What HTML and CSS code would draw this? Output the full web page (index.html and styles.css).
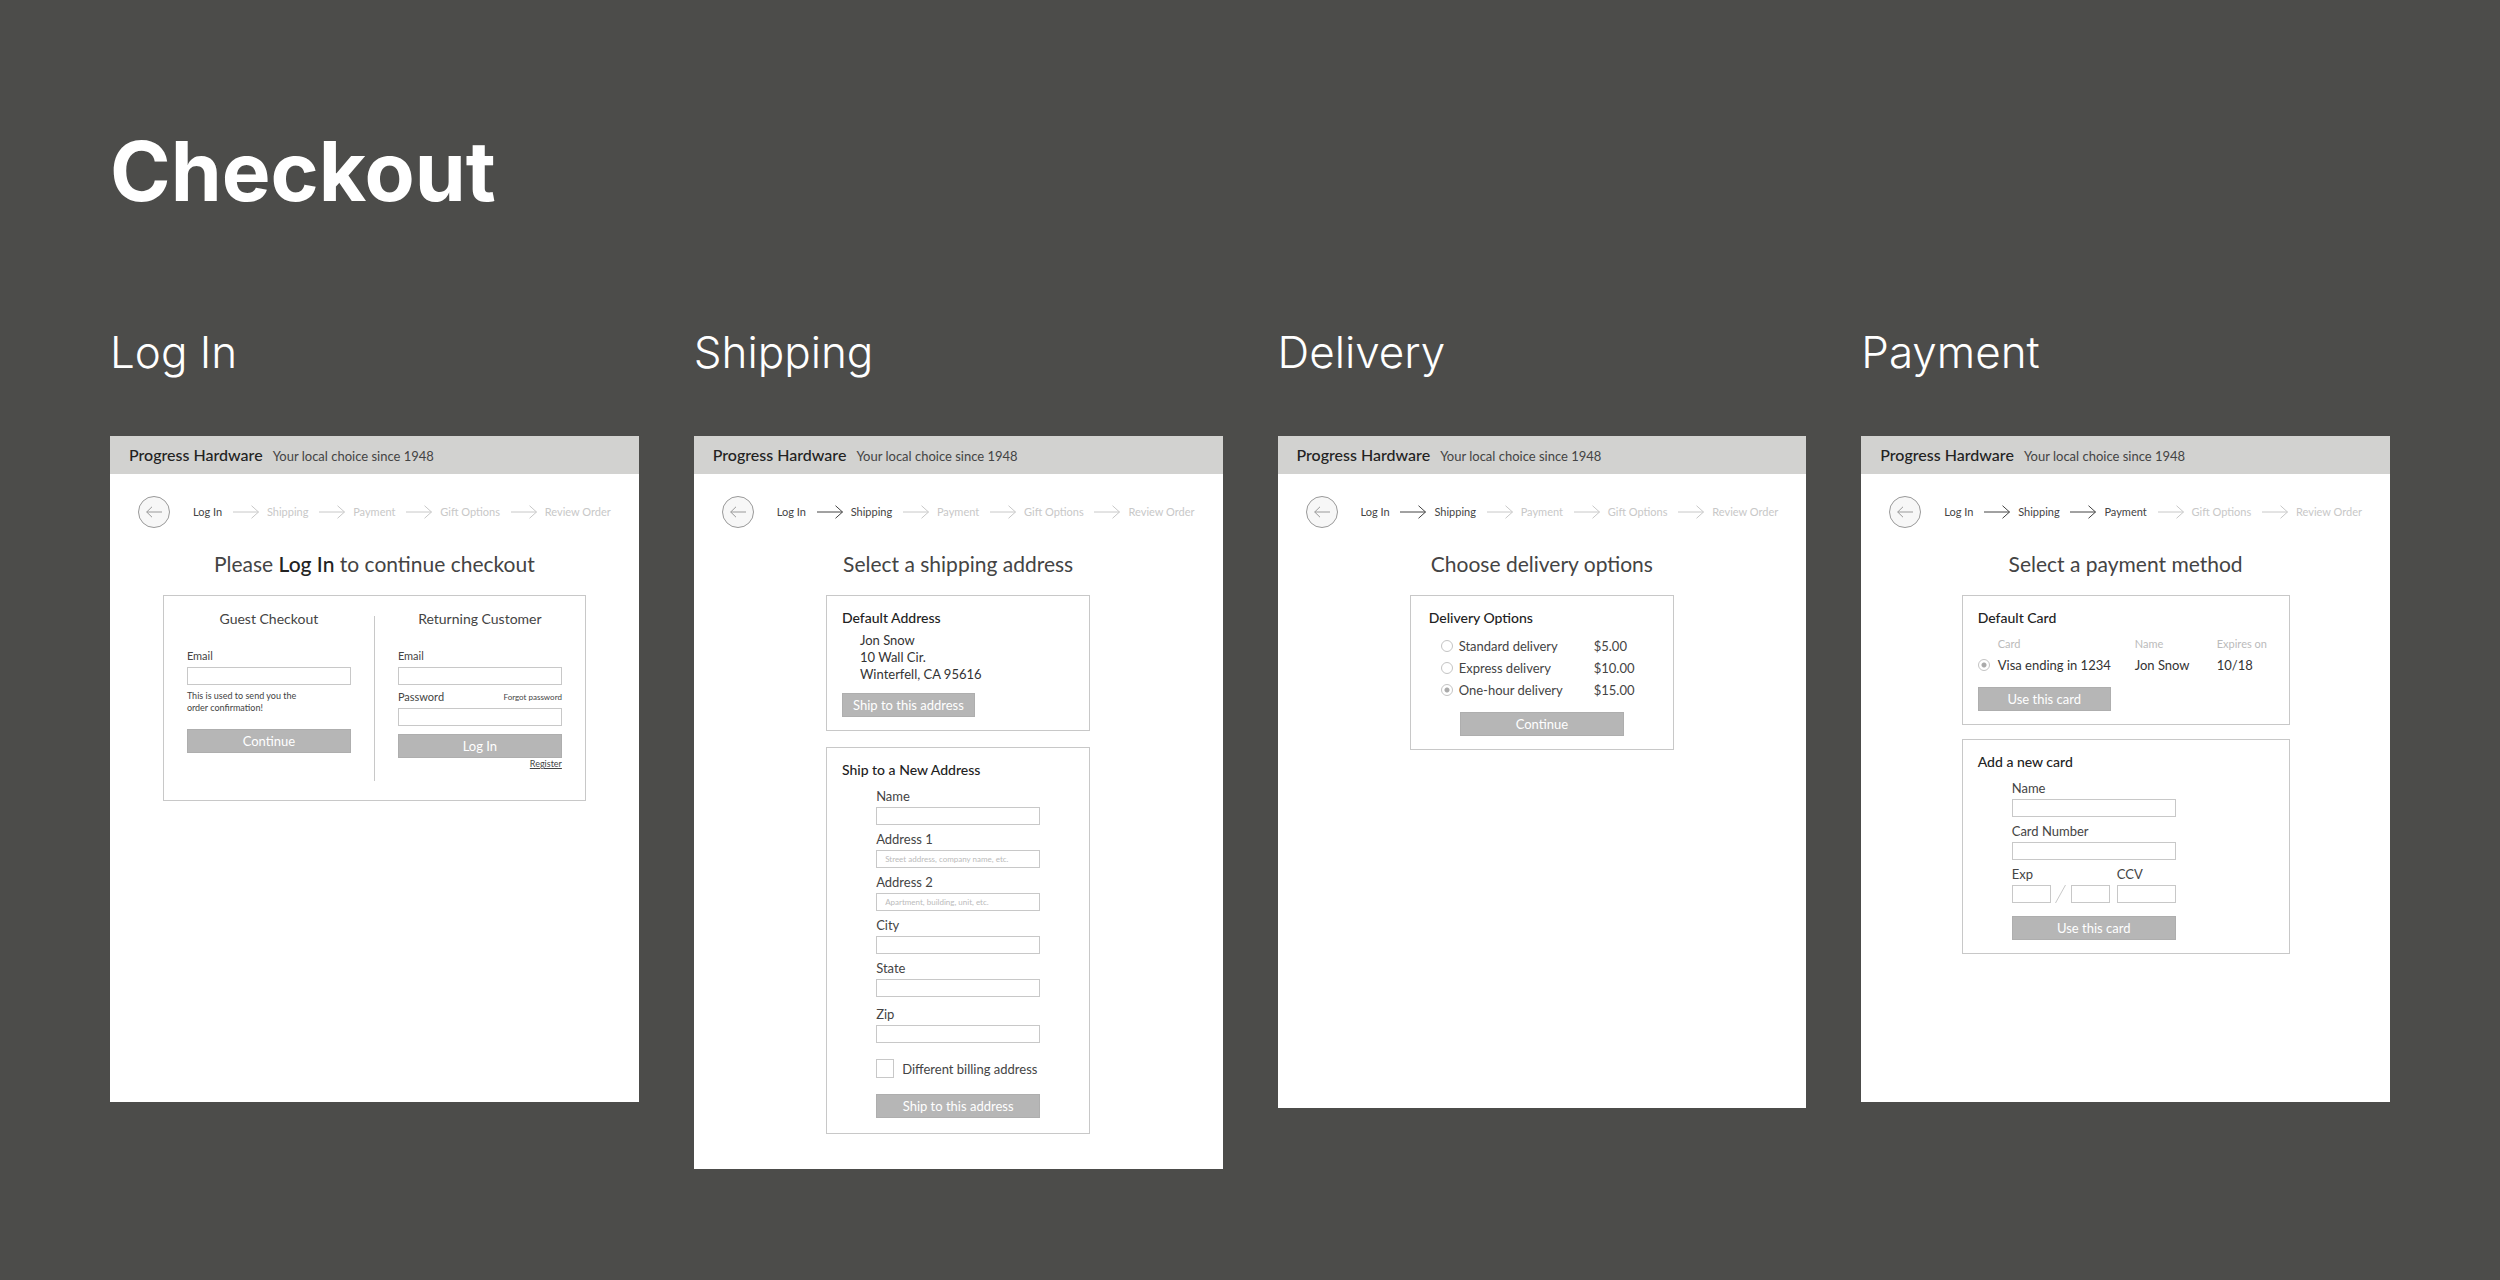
FILE: index.html
```html
<!DOCTYPE html>
<html lang="en">
<head>
<meta charset="utf-8">
<title>Checkout</title>
<link rel="stylesheet" href="styles.css">
</head>
<body>
<svg class="defs" aria-hidden="true">
  <symbol id="arrow" viewBox="0 0 26 14"><path d="M0 7H25.500M18.500.7L25.500 7L18.500 13.300" fill="none" stroke="currentColor"/></symbol>
  <symbol id="back" viewBox="0 0 16 12"><path d="M16 6H.7M6 .8L.7 6L6 11.200" fill="none" stroke="currentColor"/></symbol>
</svg>
<main class="board">
  <h1 class="board-title">Checkout</h1>
  <div class="flows">

    <section class="flow">
      <h2 class="flow-title">Log In</h2>
      <article class="screen">
        <header class="site-header"><span class="brand">Progress Hardware</span><span class="tagline">Your local choice since 1948</span></header>
        <nav class="progress" aria-label="Checkout progress">
          <button class="back" aria-label="Back"><svg class="back-icon"><use href="#back"/></svg></button>
          <ol class="steps">
            <li class="step done">Log In</li>
            <li class="step"><svg class="arrow"><use href="#arrow"/></svg>Shipping</li>
            <li class="step"><svg class="arrow"><use href="#arrow"/></svg>Payment</li>
            <li class="step"><svg class="arrow"><use href="#arrow"/></svg>Gift Options</li>
            <li class="step"><svg class="arrow"><use href="#arrow"/></svg>Review Order</li>
          </ol>
        </nav>
        <h3 class="heading">Please <strong>Log In</strong> to continue checkout</h3>
        <div class="box login-box">
          <form class="login-col">
            <h4 class="col-title">Guest Checkout</h4>
            <label class="label small" for="guest-email">Email</label>
            <input class="input" id="guest-email" type="email">
            <p class="note">This is used to send you the<br>order confirmation!</p>
            <button class="button guest-button" type="button">Continue</button>
          </form>
          <div class="divider"></div>
          <form class="login-col">
            <h4 class="col-title">Returning Customer</h4>
            <label class="label small" for="email">Email</label>
            <input class="input" id="email" type="email">
            <div class="label-row">
              <label class="label small" for="password">Password</label>
              <a class="forgot" href="#forgot">Forgot password</a>
            </div>
            <input class="input" id="password" type="password">
            <button class="button login-button" type="button">Log In</button>
            <a class="register" href="#register">Register</a>
          </form>
        </div>
      </article>
    </section>

    <section class="flow">
      <h2 class="flow-title">Shipping</h2>
      <article class="screen shipping">
        <header class="site-header"><span class="brand">Progress Hardware</span><span class="tagline">Your local choice since 1948</span></header>
        <nav class="progress" aria-label="Checkout progress">
          <button class="back" aria-label="Back"><svg class="back-icon"><use href="#back"/></svg></button>
          <ol class="steps">
            <li class="step done">Log In</li>
            <li class="step done"><svg class="arrow"><use href="#arrow"/></svg>Shipping</li>
            <li class="step"><svg class="arrow"><use href="#arrow"/></svg>Payment</li>
            <li class="step"><svg class="arrow"><use href="#arrow"/></svg>Gift Options</li>
            <li class="step"><svg class="arrow"><use href="#arrow"/></svg>Review Order</li>
          </ol>
        </nav>
        <h3 class="heading">Select a shipping address</h3>
        <form class="box narrow">
          <h4 class="box-title">Default Address</h4>
          <address class="address">Jon Snow<br>10 Wall Cir.<br>Winterfell, CA 95616</address>
          <button class="button short" type="button">Ship to this address</button>
        </form>
        <form class="box narrow new-address">
          <h4 class="box-title">Ship to a New Address</h4>
          <div class="fields">
            <label class="label" for="name">Name</label>
            <input class="input" id="name">
            <label class="label" for="address1">Address 1</label>
            <input class="input" id="address1" placeholder="Street address, company name, etc.">
            <label class="label" for="address2">Address 2</label>
            <input class="input" id="address2" placeholder="Apartment, building, unit, etc.">
            <label class="label" for="city">City</label>
            <input class="input" id="city">
            <label class="label" for="state">State</label>
            <input class="input" id="state">
            <label class="label zip-label" for="zip">Zip</label>
            <input class="input" id="zip">
            <label class="check-row"><input class="check" type="checkbox">Different billing address</label>
            <button class="button" type="button">Ship to this address</button>
          </div>
        </form>
      </article>
    </section>

    <section class="flow">
      <h2 class="flow-title">Delivery</h2>
      <article class="screen delivery">
        <header class="site-header"><span class="brand">Progress Hardware</span><span class="tagline">Your local choice since 1948</span></header>
        <nav class="progress" aria-label="Checkout progress">
          <button class="back" aria-label="Back"><svg class="back-icon"><use href="#back"/></svg></button>
          <ol class="steps">
            <li class="step done">Log In</li>
            <li class="step done"><svg class="arrow"><use href="#arrow"/></svg>Shipping</li>
            <li class="step"><svg class="arrow"><use href="#arrow"/></svg>Payment</li>
            <li class="step"><svg class="arrow"><use href="#arrow"/></svg>Gift Options</li>
            <li class="step"><svg class="arrow"><use href="#arrow"/></svg>Review Order</li>
          </ol>
        </nav>
        <h3 class="heading">Choose delivery options</h3>
        <form class="box narrow delivery-box">
          <h4 class="box-title">Delivery Options</h4>
          <div class="options">
            <label class="option"><input class="radio" type="radio" name="delivery"><span>Standard delivery</span><span>$5.00</span></label>
            <label class="option"><input class="radio" type="radio" name="delivery"><span>Express delivery</span><span>$10.00</span></label>
            <label class="option"><input class="radio" type="radio" name="delivery" checked><span>One-hour delivery</span><span>$15.00</span></label>
          </div>
          <button class="button centered" type="button">Continue</button>
        </form>
      </article>
    </section>

    <section class="flow">
      <h2 class="flow-title">Payment</h2>
      <article class="screen">
        <header class="site-header"><span class="brand">Progress Hardware</span><span class="tagline">Your local choice since 1948</span></header>
        <nav class="progress" aria-label="Checkout progress">
          <button class="back" aria-label="Back"><svg class="back-icon"><use href="#back"/></svg></button>
          <ol class="steps">
            <li class="step done">Log In</li>
            <li class="step done"><svg class="arrow"><use href="#arrow"/></svg>Shipping</li>
            <li class="step done"><svg class="arrow"><use href="#arrow"/></svg>Payment</li>
            <li class="step"><svg class="arrow"><use href="#arrow"/></svg>Gift Options</li>
            <li class="step"><svg class="arrow"><use href="#arrow"/></svg>Review Order</li>
          </ol>
        </nav>
        <h3 class="heading">Select a payment method</h3>
        <form class="box wide">
          <h4 class="box-title">Default Card</h4>
          <table class="cards">
            <thead><tr><td class="pick"></td><th class="card-col">Card</th><th class="name-col">Name</th><th>Expires on</th></tr></thead>
            <tbody><tr><td class="pick"><input class="radio" id="visa" type="radio" name="card" checked></td><td><label for="visa">Visa ending in 1234</label></td><td>Jon Snow</td><td>10/18</td></tr></tbody>
          </table>
          <button class="button short" type="button">Use this card</button>
        </form>
        <form class="box wide new-card">
          <h4 class="box-title">Add a new card</h4>
          <div class="fields">
            <label class="label" for="card-name">Name</label>
            <input class="input" id="card-name">
            <label class="label" for="card-number">Card Number</label>
            <input class="input" id="card-number">
            <div class="card-row">
              <div class="exp">
                <label class="label" for="exp-month">Exp</label>
                <div class="exp-inputs">
                  <input class="input" id="exp-month">
                  <svg class="slash" viewBox="0 0 20 18"><path d="M4.500 18L14.500 0" stroke="currentColor"/></svg>
                  <input class="input" aria-label="Expiry year">
                </div>
              </div>
              <div class="ccv">
                <label class="label" for="ccv">CCV</label>
                <input class="input" id="ccv">
              </div>
            </div>
            <button class="button" type="button">Use this card</button>
          </div>
        </form>
      </article>
    </section>

  </div>
</main>
</body>
</html>
```
FILE: styles.css
```css
* { box-sizing: border-box; }

body {
  margin: 0;
  background: #4c4c4a;
  color: #444;
  font: 13px/16px Lato, "Open Sans", sans-serif;
}

h1, h2, h3, h4, p, ol { margin: 0; padding: 0; font-weight: 400; }
button, input { font: inherit; margin: 0; }

.defs { display: none; }

.board { padding: 124px 110px 64px; }

.board-title {
  color: #fff;
  font: 700 82px/96px Inter, Lato, sans-serif;
}

.flows {
  display: grid;
  grid-template-columns: repeat(4, minmax(0, 1fr));
  gap: 55px;
  align-items: start;
  margin-top: 106px;
}

.flow-title {
  margin-bottom: 58px;
  color: #fff;
  font: 300 44px/52px Inter, Lato, sans-serif;
}

.screen {
  min-height: 666px;
  background: #fff;
}
.delivery { min-height: 672px; }
.shipping { padding-bottom: 35px; }

.site-header {
  display: flex;
  align-items: baseline;
  gap: 10px;
  padding: 7px 19px;
  background: #d2d2d0;
}
.brand { color: #222; font-size: 16px; line-height: 24px; font-weight: 500; }

.progress {
  display: flex;
  align-items: center;
  gap: 23px;
  margin: 22px 28px 24px;
}
.back {
  display: flex;
  align-items: center;
  justify-content: center;
  width: 32px;
  height: 32px;
  padding: 0;
  border: 1px solid #999;
  border-radius: 50%;
  background: #f7f7f7;
  color: #999;
}
.back-icon { width: 16px; height: 12px; }
.steps {
  display: flex;
  flex: 1;
  justify-content: space-between;
  list-style: none;
  font-size: 11px;
}
.step { display: flex; align-items: center; gap: 8px; color: #c8c8c8; }
.step.done { color: #444; }
.arrow { width: 26px; height: 14px; }

.heading {
  margin-bottom: 19px;
  color: #444;
  font-size: 21px;
  line-height: 24px;
  text-align: center;
}
.heading strong { color: #222; font-weight: 500; }

.box {
  margin: 0 auto;
  padding: 14px 15px 13px;
  border: 1px solid #c8c8c8;
}
.narrow { width: 50%; }
.wide { width: 62%; }
.box-title { color: #222; font-size: 14px; font-weight: 500; }

.label { display: block; }
.small { font-size: 11px; }
.input {
  display: block;
  width: 100%;
  height: 18px;
  padding: 0 8px;
  border: 1px solid #c8c8c8;
  border-radius: 0;
  background: #fff;
  font-size: 8px;
}
.input::placeholder { color: #bbb; opacity: 1; }
.button {
  display: block;
  width: 100%;
  height: 24px;
  padding: 0;
  border: 1px solid #aeaeae;
  background: #b6b6b6;
  color: #fff;
}
.short { width: 133px; }

.login-box {
  display: grid;
  grid-template-columns: 1fr 1px 1fr;
  width: 80%;
  padding: 15px 0 14px;
}
.divider { margin: 5px 0; background: #c8c8c8; }
.login-col { min-height: 175px; padding: 0 23px; }
.col-title { margin-bottom: 21px; font-size: 14px; text-align: center; }
.login-col .input { margin-top: 3px; }
.note { margin-top: 5px; font-size: 9px; line-height: 12px; }
.guest-button { margin-top: 15px; }
.label-row { display: flex; justify-content: space-between; margin-top: 4px; }
.forgot { color: inherit; font-size: 8px; text-decoration: none; }
.login-button { margin-top: 8px; }
.register {
  display: block;
  color: inherit;
  font-size: 9px;
  line-height: 12px;
  text-align: right;
}

.address {
  margin: 6px 0 10px 18px;
  color: #333;
  font-style: normal;
  line-height: 17px;
}

.new-address { margin-top: 16px; padding-bottom: 15px; }
.fields { width: 164px; margin: 10px auto 0; }
.fields .input { margin: 3px 0 6px; }
.fields .zip-label { margin-top: 9px; }
.check-row { display: flex; align-items: center; gap: 8px; margin: 16px 0; }
.check {
  appearance: none;
  width: 18px;
  height: 19px;
  border: 1px solid #c8c8c8;
}

.delivery-box { padding: 14px 18px 13px; }
.options { margin: 9px 0 11px 12px; line-height: 22px; }
.option { display: grid; grid-template-columns: 18px 135px auto; align-items: center; }
.radio {
  display: block;
  appearance: none;
  width: 12px;
  height: 12px;
  border: 1px solid #c4c4c4;
  border-radius: 50%;
}
.radio:checked { background: radial-gradient(circle, #aaa 2px, transparent 3px); }
.centered { width: 164px; margin: 0 auto; }

.cards {
  width: 100%;
  margin: 9px 0 10px;
  border-collapse: collapse;
  color: #333;
  line-height: 24px;
}
.cards th, .cards td { padding: 0; text-align: left; }
.cards th { color: #bbb; font-size: 11px; line-height: 18px; font-weight: 400; }
.pick { width: 20px; }
.card-col { width: 137px; }
.name-col { width: 82px; }

.new-card { margin-top: 14px; }
.new-card .fields { margin-left: 34px; }
.card-row { display: flex; justify-content: space-between; margin-bottom: 13px; }
.exp-inputs { display: flex; align-items: center; margin: 3px 0 0; }
.exp-inputs .input { width: 39px; margin: 0; }
.slash { width: 20px; height: 18px; color: #c8c8c8; }
.ccv { width: 59px; }
.ccv .input { margin-bottom: 0; }
```
